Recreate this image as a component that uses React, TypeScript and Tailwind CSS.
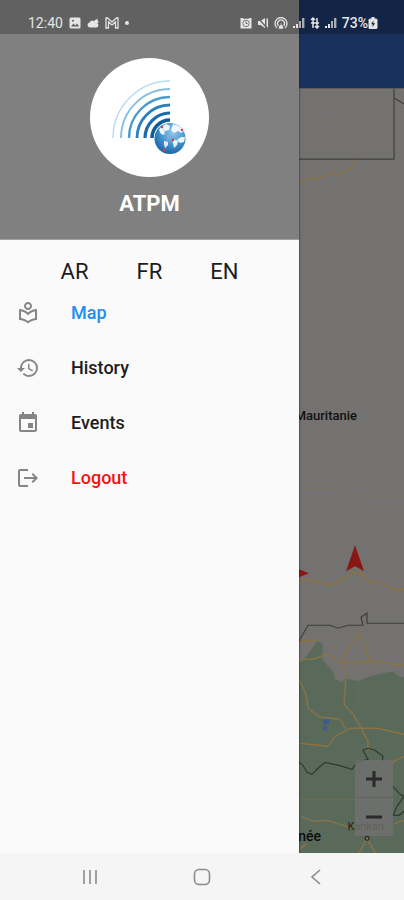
import { useState } from 'react'
import { MdEvent, MdHistory, MdLogout, MdOutlineLocalLibrary } from 'react-icons/md'
import type { IconType } from 'react-icons'

type MenuItem = {
  id: string
  label: string
  icon: IconType
}

const menu: MenuItem[] = [
  { id: 'map', label: 'Map', icon: MdOutlineLocalLibrary },
  { id: 'history', label: 'History', icon: MdHistory },
  { id: 'events', label: 'Events', icon: MdEvent },
  { id: 'logout', label: 'Logout', icon: MdLogout },
]

const languages = ['AR', 'FR', 'EN']

const waves = [
  { r: 18, width: 3.6, color: '#0f5c9c' },
  { r: 25, width: 3.2, color: '#1a6cae' },
  { r: 33, width: 2.8, color: '#2a80c0' },
  { r: 41, width: 2.4, color: '#4a9bd2' },
  { r: 49, width: 1.9, color: '#85c0e4' },
  { r: 57, width: 1.4, color: '#b5dcf2' },
]

function Signal() {
  return (
    <svg viewBox="0 0 12 12" className="h-3 w-3" fill="currentColor" aria-hidden="true">
      <path d="M0 9h2v2H0zM3 7h2v4H3z" />
      <path d="M6 4h2v7H6zM9 1h2.4v10H9z" opacity="0.7" />
    </svg>
  )
}

function StatusBar() {
  return (
    <div className="absolute inset-x-0 top-0 z-20 flex h-[34px] items-center justify-between bg-black/24 pt-3 pr-[26px] pl-7 text-sm text-neutral-200">
      <div className="flex items-center gap-1.5">
        <span>12:40</span>
        <svg viewBox="0 0 12 12" className="h-3 w-3" aria-hidden="true">
          <rect x="0.5" y="0.5" width="11" height="11" rx="1.5" fill="currentColor" />
          <path d="M2 9.5l2.5-3 2 2 1.5-2 2.2 3z" fill="#616161" />
          <circle cx="4" cy="3.8" r="1" fill="#616161" />
        </svg>
        <svg viewBox="0 0 12 12" className="h-3 w-3" fill="currentColor" aria-hidden="true">
          <path d="M2.8 10.5a2.6 2.6 0 0 1-.3-5.1 3.4 3.4 0 0 1 5-1.2A2.3 2.3 0 0 1 11 2.5c-.6 1.2.2 2 .7 2.2-.3 1-1 1.4-1.5 1.5a2.3 2.3 0 0 1-.7 4.3z" />
        </svg>
        <svg viewBox="0 0 14 12" className="h-3 w-3.5" fill="none" stroke="currentColor" strokeWidth="1.3" aria-hidden="true">
          <path d="M1 1v10h2.5V5L7 8l3.5-3v6H13V1h-1.5L7 5 2.5 1z" />
        </svg>
        <span className="h-1 w-1 rounded-full bg-current" />
      </div>
      <div className="flex items-center gap-[5px]">
        <svg viewBox="0 0 12 12" className="h-3 w-3" aria-hidden="true">
          <path d="M0.5 1h2l1 .8h5l1-.8h2v10.5h-11z" fill="currentColor" />
          <circle cx="6" cy="6.4" r="3.2" fill="none" stroke="#616161" strokeWidth="0.8" />
          <path d="M6 4.5v2h1.5" fill="none" stroke="#616161" />
        </svg>
        <svg viewBox="0 0 12 12" className="h-3 w-3" aria-hidden="true">
          <path d="M1 4h2.5L8 1v10L3.5 8H1zM9.5 1.5H11v9H9.5z" fill="currentColor" />
          <path d="M1 1l9 10" stroke="#616161" strokeWidth="1.2" />
        </svg>
        <svg viewBox="0 0 14 12" className="h-3 w-3.5" fill="none" stroke="currentColor" strokeWidth="1.3" aria-hidden="true">
          <path d="M3 11a6 6 0 1 1 8 0M4.5 8.8a3.4 3.4 0 1 1 5 0" />
          <path d="M7 6.5v1M5.5 11c0-3 3-3 3 0z" fill="currentColor" />
        </svg>
        <Signal />
        <svg viewBox="0 0 10 12" className="h-3 w-2.5" fill="none" stroke="currentColor" strokeWidth="1.5" aria-hidden="true">
          <path d="M3 11V1M1 3l2-2 2 2M7 1v10M5 9l2 2 2-2M1 6h8" />
        </svg>
        <Signal />
        <div className="flex items-center">
          <span className="font-medium">73%</span>
          <svg viewBox="0 0 9 12" className="h-3 w-2.5" aria-hidden="true">
            <path d="M3 0h3v1.5h1.5A1.5 1.5 0 0 1 9 3v7.5A1.5 1.5 0 0 1 7.500 12h-6A1.5 1.5 0 0 1 0 10.500V3a1.5 1.5 0 0 1 1.500-1.500H3z" fill="currentColor" />
            <path d="M5 3.500L2.500 7.200h1.700L4 10l2.600-3.800H4.800z" fill="#132747" />
          </svg>
        </div>
      </div>
    </div>
  )
}

function Logo() {
  return (
    <div className="h-[119px] w-[119px] rounded-full bg-white">
      <svg viewBox="0 0 119 119" className="h-full w-full" role="img" aria-label="ATPM logo">
        <defs>
          <radialGradient id="globe" cx="0.6" cy="0.3" r="0.8">
            <stop offset="0" stopColor="#8ecbee" />
            <stop offset="0.55" stopColor="#3b8fcb" />
            <stop offset="1" stopColor="#14599a" />
          </radialGradient>
        </defs>
        {waves.map((w) => (
          <path
            key={w.r}
            d={`M${80 - w.r} 80A${w.r} ${w.r} 0 0 1 80 ${80 - w.r}`}
            fill="none"
            stroke={w.color}
            strokeWidth={w.width}
          />
        ))}
        <circle cx="80" cy="80.5" r="15.5" fill="url(#globe)" />
        <path
          d="M71 69l5-3 4 2-1 4-4 1-1 4-3-1-2-4zM83 66l6 2 5 5-3 2-3-2-4 2-3-3zM91 79l4 0-1 5-4 1-3-3zM74 83l4 1 0 3-3 3-1-4zM83 81l5 2-1 4-3 3-1-5z"
          fill="#fff"
          opacity="0.9"
        />
        <path d="M72 69l6 10 12-6M78 79l6 8M78 79l-3 12" fill="none" stroke="#d8a4b8" strokeWidth="0.4" />
        <g fill="#d33a45">
          <circle cx="72" cy="69" r="1.2" />
          <circle cx="92" cy="72" r="1.2" />
          <circle cx="83" cy="82" r="1.3" />
          <circle cx="74" cy="92" r="1.3" />
        </g>
      </svg>
    </div>
  )
}

function Drawer() {
  const [active, setActive] = useState('map')

  const itemColor = (id: string) => {
    if (id === 'logout') return 'text-[#f01510]'
    return id === active ? 'text-[#1e8ef5]' : 'text-[#1c1c1c]'
  }

  return (
    <aside className="z-10 flex w-[74%] flex-col bg-[#fafafa] shadow-[0_0_2px_#222]">
      <header className="flex flex-col items-center border-b border-neutral-400 bg-[#808080] pt-[58px] pb-[21px]">
        <Logo />
        <h1 className="mt-[13px] text-[22px] leading-7 font-bold text-white">ATPM</h1>
      </header>
      <div className="flex justify-center gap-12 pt-[18px] text-[22px] leading-[27px] text-[#1c1c1c]">
        {languages.map((lang) => (
          <button key={lang} type="button">
            {lang}
          </button>
        ))}
      </div>
      <nav>
        <ul>
          {menu.map(({ id, label, icon: Icon }) => (
            <li key={id}>
              <button
                type="button"
                onClick={() => setActive(id)}
                className="flex h-[55px] w-full items-center gap-[31px] px-4 text-left"
              >
                <Icon className="h-6 w-6 text-[#858585]" />
                <span className={`text-lg font-medium ${itemColor(id)}`}>{label}</span>
              </button>
            </li>
          ))}
        </ul>
      </nav>
    </aside>
  )
}

function MapView() {
  return (
    <section className="flex min-w-0 flex-1 flex-col">
      <div className="h-[88px] bg-[#19315d]" />
      <div className="relative flex-1 overflow-hidden border-t border-[#5c5c5c] bg-[#737270]">
        <svg
          viewBox="0 0 105 765"
          preserveAspectRatio="xMinYMin slice"
          className="absolute inset-0 h-full w-full"
          fill="none"
          aria-hidden="true"
        >
          <path
            d="M0 575L9 565 18 552 24 555 23 569 29 577 34 582 36 590 43 593 46 589 59 592 71 587 80 585 94 582 99 587 105 588V765H0z"
            fill="#596a5b"
          />
          <g stroke="#827353" opacity="0.5">
            <path d="M8 28l18 0 12 3 13 0" />
            <path d="M4 399h30l34 9 37 1" />
            <path d="M58 484l5 31M59 544v70M0 710h55" />
          </g>
          <g stroke="#8a7345" strokeWidth="1.4" strokeLinejoin="round">
            <path d="M0 94l11-5 7 1 15-7 7 3 13-7 5-9" />
            <path d="M0 490l14 1 17 5 25-13 7 2 8 8h8l19 8 7-1" strokeWidth="1.8" />
            <path d="M0 552l18-1M0 570h14l14-5 15 9 28-2 34 4" />
            <path d="M43 574l3-10 8-12 5-8 5 7 4 14 5 9" />
            <path d="M44 574l3 11-2 30 9 10 7 12 8 15v10" />
            <path d="M0 590l7 15 2 14 12 9 20 2 5 9" />
            <path d="M0 654l29 3 7-10 15-8 27 0 27 6M91 674l14-7" />
            <path d="M2 727l12 5 14-1 23 7h20M94 735l11-4M59 765l9-16 9 16M0 760l8-6" />
          </g>
          <g stroke="#3f403e" strokeWidth="1.2">
            <path d="M0 70h95V0M95 9l10 6" />
            <path d="M0 552l9-16h22l8 3 10-3h15l-2-8 6-4v10h37" />
            <path
              d="M0 673l4 3 4 7 5 2 6-6 7-6 14 3 13 4 5-7 11-3-5-9 5-2 7 2 8 6-1 6M94 697l7 8 4 2-7 10-4 9 6 0 5-4"
              stroke="#2f3a31"
            />
          </g>
          <path d="M56 456l9 26-9-5-9 5z" fill="#8a1713" />
          <path d="M0 480l10 4-10 4z" fill="#8a1713" />
          <path d="M24 630h6v5h-6zM24 637h4v4h-4z" fill="#3f5a8c" />
          <circle cx="68" cy="749" r="2" stroke="#222" />
        </svg>
        <span className="absolute top-[317px] right-[47px] text-[13px] font-medium text-[#111]">
          Mauritanie
        </span>
        <span className="absolute right-[83px] bottom-[7px] text-sm font-medium text-[#0c0c0c]">
          Guinée
        </span>
        <span className="absolute right-[20px] bottom-[18px] text-[11px] text-[#1c1c1c]">
          Kankan
        </span>
        <div className="absolute right-[11px] bottom-[17px] flex w-[38px] flex-col rounded-xs bg-[#70716f]/80 text-[#2a2a2a]">
          <button type="button" aria-label="Zoom in" className="flex h-[38px] items-center justify-center border-b border-[#62635f]">
            <svg viewBox="0 0 16 16" className="h-4 w-4" stroke="currentColor" strokeWidth="3">
              <path d="M8 0v16M0 8h16" />
            </svg>
          </button>
          <button type="button" aria-label="Zoom out" className="flex h-[38px] items-center justify-center">
            <svg viewBox="0 0 16 16" className="h-4 w-4" stroke="currentColor" strokeWidth="3">
              <path d="M0 8h16" />
            </svg>
          </button>
        </div>
      </div>
    </section>
  )
}

function SystemNav() {
  return (
    <footer className="z-10 flex h-[47px] items-center justify-between bg-[#f5f5f5] px-20 text-[#8c8c8c]">
      <button type="button" aria-label="Recent apps">
        <svg viewBox="0 0 20 20" className="h-5 w-5" fill="none" stroke="currentColor" strokeWidth="1.6">
          <path d="M4 3v14M10 3v14M16 3v14" />
        </svg>
      </button>
      <button type="button" aria-label="Home">
        <svg viewBox="0 0 20 20" className="h-5 w-5" fill="none" stroke="currentColor" strokeWidth="1.6">
          <rect x="2.5" y="2.5" width="15" height="15" rx="4.5" />
        </svg>
      </button>
      <button type="button" aria-label="Back">
        <svg viewBox="0 0 20 20" className="h-5 w-5" fill="none" stroke="currentColor" strokeWidth="1.6">
          <path d="M16 3l-8 7 8 7" />
        </svg>
      </button>
    </footer>
  )
}

export default function App() {
  return (
    <div className="relative flex min-h-screen flex-col overflow-hidden font-[Roboto,sans-serif]">
      <StatusBar />
      <main className="flex flex-1">
        <Drawer />
        <MapView />
      </main>
      <SystemNav />
    </div>
  )
}
